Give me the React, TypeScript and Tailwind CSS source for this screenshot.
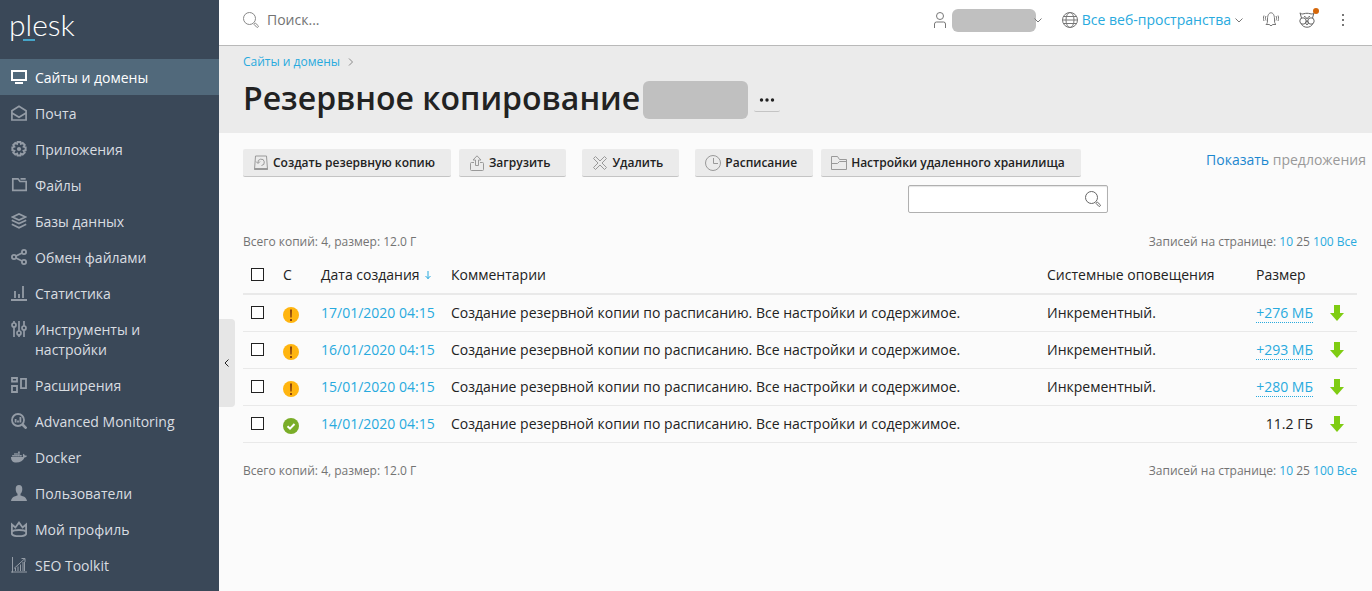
import { useState } from 'react';
import type { ReactNode } from 'react';
import { FaDocker } from 'react-icons/fa';

interface IconProps {
  children: ReactNode;
  className?: string;
  width?: number;
}

function Icon({ children, className = '', width = 1 }: IconProps) {
  return (
    <svg
      viewBox="0 0 16 16"
      className={`h-4 w-4 shrink-0 ${className}`}
      fill="none"
      stroke="currentColor"
      strokeWidth={width}
      aria-hidden="true"
    >
      {children}
    </svg>
  );
}

const navItems: { label: string; icon: ReactNode }[] = [
  {
    label: 'Сайты и домены',
    icon: (
      <Icon width={2}>
        <path d="M1 2h14v9H1z" />
        <path d="M4 14h8" />
      </Icon>
    ),
  },
  {
    label: 'Почта',
    icon: (
      <Icon width={1.7}>
        <path d="M.9 5.800 8 1.200 15.100 5.800v9.200H.9zM1 8l7 4.200L15 8" />
      </Icon>
    ),
  },
  {
    label: 'Приложения',
    icon: (
      <Icon width={2}>
        <path d="M6.600 1h2.800l.5 1.800 1.800-.9 2 2-1 1.800 1.900.6v3l-1.900.5 1 1.800-2 2-1.800-.9-.5 1.900H6.600l-.5-1.900-1.800.9-2-2 1-1.800-1.900-.5v-3l1.900-.6-1-1.800 2-2 1.800.9z" />
        <circle cx="8" cy="8" r="1.100" />
      </Icon>
    ),
  },
  {
    label: 'Файлы',
    icon: (
      <Icon width={1.7}>
        <path d="M1.800 1.800H7L9 4.500h6.200v8.800H1.800zM9.500 1.800h5.200" />
      </Icon>
    ),
  },
  {
    label: 'Базы данных',
    icon: (
      <Icon width={1.7}>
        <path d="M1.500 4 8 1l6.500 3L8 7zM.8 7.200 8 10.600l7.200-3.400M.8 11.200 8 14.800l7.200-3.600" />
      </Icon>
    ),
  },
  {
    label: 'Обмен файлами',
    icon: (
      <Icon width={1.8}>
        <circle cx="3" cy="8" r="2.100" />
        <circle cx="13" cy="3" r="2.100" />
        <circle cx="13" cy="13" r="2.100" />
        <path d="m5 7 6-3M5 9l6 3" />
      </Icon>
    ),
  },
  {
    label: 'Статистика',
    icon: (
      <Icon width={1.8}>
        <path d="M0 15h16M4 6v7M8 9v4M12 1v12" />
      </Icon>
    ),
  },
  {
    label: 'Инструменты и настройки',
    icon: (
      <Icon width={1.7}>
        <path d="M3 0v2M3 6v10M8 0v10M8 14v2M13 0v5M13 9v7" />
        <circle cx="3" cy="4" r="2" />
        <circle cx="8" cy="12" r="2" />
        <circle cx="13" cy="7" r="2" />
      </Icon>
    ),
  },
  {
    label: 'Расширения',
    icon: (
      <Icon width={1.8}>
        <path d="M1 1h5v3.500H1zM1 9h5v6H1zM10 1.800h5v9.400h-5z" />
      </Icon>
    ),
  },
  {
    label: 'Advanced Monitoring',
    icon: (
      <Icon width={1.8}>
        <circle cx="7" cy="7" r="6" />
        <path d="m11.500 11.500 4 4" strokeWidth="2.600" />
        <path d="M4.600 6v3.500M7 7.500v2M9.400 4v5.500" />
      </Icon>
    ),
  },
  { label: 'Docker', icon: <FaDocker className="h-4 w-4 shrink-0" aria-hidden="true" /> },
  {
    label: 'Пользователи',
    icon: (
      <Icon>
        <path
          d="M8 0c2.200 0 3.300 1.600 3.300 4 0 2.200-.6 3.800-1.800 4.800v1.600c3 .8 6 1.600 6.500 5.600H0c.5-4 3.500-4.800 6.500-5.600V8.800C5.300 7.800 4.700 6.200 4.700 4 4.700 1.600 5.800 0 8 0z"
          fill="currentColor"
          stroke="none"
        />
      </Icon>
    ),
  },
  {
    label: 'Мой профиль',
    icon: (
      <Icon width={1.8}>
        <path d="M.9 13V3.500l3.500 3L8 1.500l3.600 5 3.500-3V13c-1.500 3-12.700 3-14.200 0z" />
        <path d="M1 10.500c2-2 12-2 14 0" />
      </Icon>
    ),
  },
  {
    label: 'SEO Toolkit',
    icon: (
      <Icon>
        <path d="M1.500 0v15.500M0 15h16M4.500 14v-3M7 14V9.500M9.500 14V7.500M12 14V5M13.500 14V5M3 11.500 14 1.500M10.500 1.500H14V5" />
      </Icon>
    ),
  },
];

const actions: { label: string; icon: ReactNode; className: string }[] = [
  {
    label: 'Создать резервную копию',
    className: 'mr-2',
    icon: (
      <Icon>
        <path d="M2.500 1h11l1 13.500h-13z" />
        <path d="M1.500 14h13" strokeWidth="2" />
        <path d="M5 8A3.200 3.200 0 1 1 8.500 10.500M3 6.500l2 2 2-2" />
      </Icon>
    ),
  },
  {
    label: 'Загрузить',
    className: 'mr-4',
    icon: (
      <Icon>
        <path d="M5 7.500H2.500a1 1 0 0 0-1 1v6a1 1 0 0 0 1 1h11a1 1 0 0 0 1-1v-6a1 1 0 0 0-1-1H11" />
        <path d="M6.500 10.500V5h-2.500L8 .8 12 5H9.500v5.500z" />
      </Icon>
    ),
  },
  {
    label: 'Удалить',
    className: 'mr-4',
    icon: (
      <Icon>
        <path
          d="M3.500 1.500 8 6l4.500-4.500 2 2L10 8l4.500 4.500-2 2L8 10l-4.500 4.500-2-2L6 8 1.500 3.500z"
          strokeLinejoin="round"
        />
      </Icon>
    ),
  },
  {
    label: 'Расписание',
    className: 'mr-2',
    icon: (
      <Icon>
        <circle cx="8" cy="8" r="7.500" />
        <path d="M8.500 3v5.500H13" />
      </Icon>
    ),
  },
  {
    label: 'Настройки удаленного хранилища',
    className: '',
    icon: (
      <Icon>
        <path d="M.5 14.500v-13h6l2 3h7v10zM.5 8.500h6l2-2h7" />
      </Icon>
    ),
  },
];

interface Backup {
  date: string;
  ok: boolean;
  system: string;
  size: string;
}

const comment = 'Создание резервной копии по расписанию. Все настройки и содержимое.';

const backups: Backup[] = [
  { date: '17/01/2020 04:15', ok: false, system: 'Инкрементный.', size: '+276 МБ' },
  { date: '16/01/2020 04:15', ok: false, system: 'Инкрементный.', size: '+293 МБ' },
  { date: '15/01/2020 04:15', ok: false, system: 'Инкрементный.', size: '+280 МБ' },
  { date: '14/01/2020 04:15', ok: true, system: '', size: '11.2 ГБ' },
];

function SearchIcon({ className }: { className: string }) {
  return (
    <Icon className={className}>
      <circle cx="6.500" cy="6.500" r="6" />
      <path d="m11 12.300 1.300-1.300 3 2.800c.7.700-.8 2.200-1.500 1.500z" />
    </Icon>
  );
}

function ChevronIcon() {
  return (
    <svg viewBox="0 0 8 8" className="h-2 w-2 shrink-0" fill="none" stroke="#777" aria-hidden="true">
      <path d="m.5 2.500 3.500 3.500 3.500-3.500" />
    </svg>
  );
}

function StatusIcon({ ok }: { ok: boolean }) {
  return (
    <svg viewBox="0 0 16 16" className="relative top-0.5 block h-4 w-4" aria-hidden="true">
      <circle cx="8" cy="8" r="8" fill={ok ? '#7aad28' : '#ffb510'} />
      {ok ? (
        <path d="m4.500 8.300 2.500 2.400 4.500-4.700" fill="none" stroke="#fff" strokeWidth="2" />
      ) : (
        <path d="M7 2.500h2L8.700 10.500H7.300zM7 12h2v2H7z" fill="#8a4510" />
      )}
    </svg>
  );
}

function Checkbox({ label }: { label: string }) {
  return (
    <input
      type="checkbox"
      aria-label={label}
      className="block h-[13px] w-[13px] appearance-none border border-[#222] bg-white checked:bg-[#28aade]"
    />
  );
}

function Sidebar() {
  return (
    <aside className="relative w-[219px] shrink-0 bg-[#3a4858]">
      <a
        href="#"
        className="relative block h-[59px] pt-1 pl-[9px] text-[30px] leading-10 font-light text-white"
        style={{ fontFamily: 'Lato, sans-serif' }}
      >
        plesk
        <span className="absolute top-[39px] left-[23px] h-0.5 w-3 bg-[#45a5c9]" />
      </a>
      <nav>
        {navItems.map((item, i) => (
          <a
            key={item.label}
            href="#"
            className={`flex gap-2 pt-[9px] pr-10 pb-[7px] pl-[11px] text-sm leading-5 ${
              i === 0 ? 'bg-[#51697b] text-white' : 'text-[#d9dde1]'
            }`}
          >
            <span className={`pt-px ${i === 0 ? 'text-white' : 'text-[#949ca6]'}`}>{item.icon}</span>
            {item.label}
          </a>
        ))}
      </nav>
      <button
        aria-label="Свернуть меню"
        className="absolute top-[319px] left-full flex h-[88px] w-4 items-center justify-center rounded-r bg-[#e6e6e6]"
      >
        <svg viewBox="0 0 8 8" className="h-2 w-2" fill="none" stroke="#222" aria-hidden="true">
          <path d="M5.500.5 2 4l3.500 3.500" />
        </svg>
      </button>
    </aside>
  );
}

function Header() {
  return (
    <header className="flex h-[46px] items-center border-b border-[#b9b9b9] bg-white pr-[21px] pb-[5px] pl-6 text-sm shadow-[0_1px_2px_rgba(0,0,0,0.15)]">
      <label className="flex flex-1 items-center gap-2">
        <SearchIcon className="text-[#888]" />
        <input
          type="search"
          placeholder="Поиск..."
          aria-label="Поиск"
          className="w-full outline-none placeholder:text-[#737373]"
        />
      </label>
      <button className="flex items-center" aria-label="Учетная запись">
        <Icon className="mr-1 text-[#777]">
          <circle cx="8" cy="4" r="3.500" />
          <path d="M2.500 16v-4a2 2 0 0 1 2-2h7a2 2 0 0 1 2 2v4" />
        </Icon>
        <span className="h-[23px] w-[84px] rounded-md bg-[#c0c0c0]" />
        <span className="-ml-0.5">
          <ChevronIcon />
        </span>
      </button>
      <button className="ml-5 flex items-center gap-1 text-[#28aade]">
        <Icon className="text-[#777]">
          <circle cx="8" cy="8" r="7.500" />
          <ellipse cx="8" cy="8" rx="4" ry="7.500" />
          <path d="M1.500 4.500h13M.5 8h15M1.500 11.500h13" />
        </Icon>
        Все веб-пространства
        <ChevronIcon />
      </button>
      <button className="ml-5" aria-label="Уведомления">
        <Icon className="text-[#777]">
          <path d="M3 12.500c1.500-1 1.500-2.500 1.500-5.500C4.500 3 6 .8 8 .8S11.500 3 11.500 7c0 3 0 4.500 1.500 5.500H9.500c0 1.500-3 1.500-3 0z" />
          <path d="M3 4c-.8 1.500-.8 3 0 4.500M13 4c.8 1.500.8 3 0 4.500M1 3.500c-.8 2-.8 3.500 0 5.500M15 3.500c.8 2 .8 3.500 0 5.500" />
        </Icon>
      </button>
      <button className="relative ml-5" aria-label="Советник">
        <Icon className="text-[#666]">
          <path d="M2.500 6 1 .8c1 1.400 2.500 1.400 4 .9 2-.6 4-.6 6 0 1.500.5 3 .5 4-.9L13.500 6M2.500 12c1.500 4.300 9.500 4.300 11 0M5 4.500c1.500.2 2.500 1 3 2.500.5-1.500 1.500-2.300 3-2.500" />
          <path d="m8 8.500-1.500 2.500L8 13l1.500-2z" />
          <circle cx="4" cy="9" r="3.200" />
          <circle cx="12" cy="9" r="3.200" />
        </Icon>
        <span className="absolute -top-1 -right-1 h-1.5 w-1.5 rounded-full bg-[#d5670a]" />
      </button>
      <button className="ml-5" aria-label="Ещё">
        <Icon>
          <path d="M7 2h2v2H7zM7 7h2v2H7zM7 12h2v2H7z" fill="#777" stroke="none" />
        </Icon>
      </button>
    </header>
  );
}

function ListInfo() {
  return (
    <div className="flex justify-between text-xs text-[#737373]">
      <span>Всего копий: 4, размер: 12.0 Г</span>
      <span>
        Записей на странице: <a href="#" className="text-[#28aade]">10</a> 25{' '}
        <a href="#" className="text-[#28aade]">100</a> <a href="#" className="text-[#28aade]">Все</a>
      </span>
    </div>
  );
}

export default function App() {
  const [query, setQuery] = useState('');
  const rows = backups.filter((b) => b.date.includes(query));

  return (
    <div
      className="flex min-h-screen bg-[#fbfbfb] text-[#222]"
      style={{ fontFamily: '"Open Sans", "Noto Sans", sans-serif' }}
    >
      <Sidebar />
      <div className="min-w-0 flex-1">
        <Header />
        <div className="bg-[#ebebeb] pt-2 pb-3.5 pl-6">
          <div className="flex items-center gap-2 text-xs">
            <a href="#" className="text-[#28aade]">Сайты и домены</a>
            <svg viewBox="0 0 6 8" className="h-2 w-1.5" fill="none" stroke="#888" aria-hidden="true">
              <path d="M1 .5 4.500 4 1 7.500" />
            </svg>
          </div>
          <div className="mt-[11px] flex items-start">
            <h1 className="text-[32px] leading-[34px] font-semibold">Резервное копирование</h1>
            <span className="ml-[3px] h-[38px] w-[105px] rounded-md bg-[#c0c0c0]" />
            <button
              aria-label="Действия"
              className="mt-[7px] ml-1.5 flex h-6 w-[26px] items-center justify-center rounded-xs border-b border-[#c4c4c4]"
            >
              <svg viewBox="0 0 16 4" className="h-1 w-4" fill="#222" aria-hidden="true">
                <circle cx="2.500" cy="2" r="1.700" />
                <circle cx="8" cy="2" r="1.700" />
                <circle cx="13.500" cy="2" r="1.700" />
              </svg>
            </button>
          </div>
        </div>

        <main className="pt-4 pl-6">
          <div className="flex justify-between pr-1.5">
            <div className="flex flex-col gap-2">
              <div className="flex pr-[27px]">
                {actions.map((action) => (
                  <button
                    key={action.label}
                    className={`flex h-7 items-center gap-1 rounded-xs border-b border-[#c4c4c4] bg-[#ebebeb] pt-px pr-4 pl-2.5 text-xs font-semibold whitespace-nowrap ${action.className}`}
                  >
                    <span className="text-[#999]">{action.icon}</span>
                    {action.label}
                  </button>
                ))}
              </div>
              <label className="flex h-7 w-[200px] items-center self-end rounded-xs border border-[#b0b0b0] bg-white pr-1.5 shadow-[inset_0_1px_1px_#e5e5e5]">
                <input
                  type="text"
                  aria-label="Поиск по списку"
                  value={query}
                  onChange={(e) => setQuery(e.target.value)}
                  className="min-w-0 flex-1 px-2 text-sm outline-none"
                />
                <SearchIcon className="text-[#666]" />
              </label>
            </div>
            <p className="text-sm leading-[22px] text-[#999]">
              <a href="#" className="text-[#1b87cf]">Показать</a> предложения
            </p>
          </div>

          <div className="mt-[21px] pr-[15px]">
            <ListInfo />
            <table className="my-1.5 w-full table-fixed text-left text-sm">
              <colgroup>
                <col className="w-8" />
                <col className="w-[38px]" />
                <col className="w-[130px]" />
                <col />
                <col className="w-[209px]" />
                <col className="w-[73px]" />
                <col className="w-9" />
              </colgroup>
              <thead>
                <tr className="h-[38px] border-b-2 border-[#e9e9e9] whitespace-nowrap">
                  <th className="px-2">
                    <Checkbox label="Выбрать все" />
                  </th>
                  <th className="px-2 font-normal">С</th>
                  <th className="px-2 font-normal">
                    <a href="#" className="flex items-center gap-1">
                      Дата создания
                      <svg viewBox="0 0 8 10" className="h-2.5 w-2" fill="none" stroke="#28aade" aria-hidden="true">
                        <path d="M4 1v8M1.500 6l2.500 2.500L6.500 6" />
                      </svg>
                    </a>
                  </th>
                  <th className="px-2 font-normal">Комментарии</th>
                  <th className="px-2 font-normal">Системные оповещения</th>
                  <th className="px-2 font-normal">Размер</th>
                  <th />
                </tr>
              </thead>
              <tbody>
                {rows.map((row) => (
                  <tr key={row.date} className="h-[37px] border-b border-[#e9e9e9] whitespace-nowrap">
                    <td className="px-2">
                      <Checkbox label={row.date} />
                    </td>
                    <td className="px-2">
                      <StatusIcon ok={row.ok} />
                    </td>
                    <td className="px-2">
                      <a href="#" className="text-[#28aade]">{row.date}</a>
                    </td>
                    <td className="px-2">{comment}</td>
                    <td className="px-2">{row.system}</td>
                    <td className="px-2 text-right">
                      {row.ok ? (
                        row.size
                      ) : (
                        <a href="#" className="border-b border-dotted border-[#28aade] text-[#28aade]">
                          {row.size}
                        </a>
                      )}
                    </td>
                    <td className="px-2">
                      <a href="#" aria-label="Скачать">
                        <svg viewBox="0 0 16 16" className="h-4 w-4" fill="#7fcc12" aria-hidden="true">
                          <path d="M5 0h6v8h4L8 16 1 8h4z" />
                        </svg>
                      </a>
                    </td>
                  </tr>
                ))}
              </tbody>
            </table>
            <div className="pt-3.5">
              <ListInfo />
            </div>
          </div>
        </main>
      </div>
    </div>
  );
}
